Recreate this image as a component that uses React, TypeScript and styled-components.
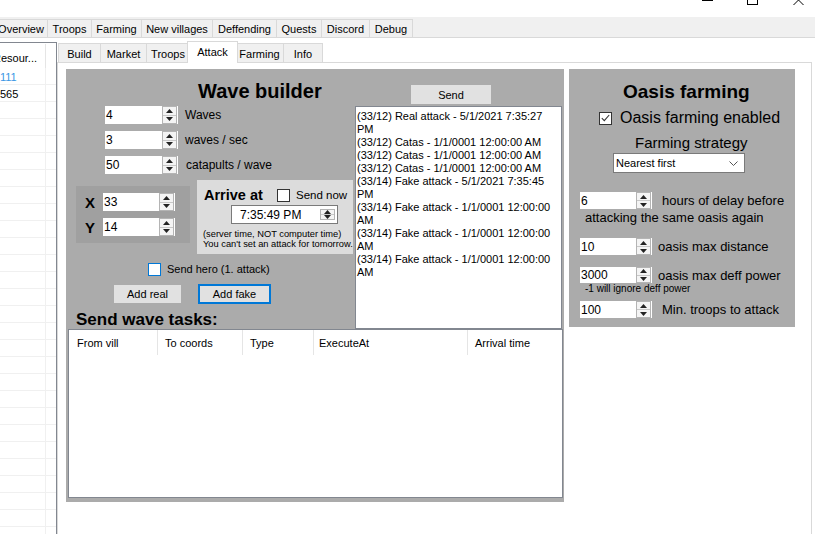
import React from 'react';
import styled, { createGlobalStyle } from 'styled-components';

const GlobalStyle = createGlobalStyle`
  html, body { margin: 0; padding: 0; background: #fff; }
  body { font-family: "Liberation Sans", Arial, sans-serif; font-size: 11px; color: #000; overflow: hidden; }
  * { box-sizing: border-box; }
`;

const Window = styled.div`
  width: 815px; height: 534px; overflow: hidden;
  display: flex; flex-direction: column; background: #fff;
`;

const TitleBar = styled.div`
  height: 17px; flex: none; display: flex; justify-content: flex-end; margin-right: -7px;
`;
const CaptionBtn = styled.div`
  width: 46px; height: 17px; display: flex;
`;

const MainTabBar = styled.div`
  height: 21px; flex: none; background: #f0f0f0; border-bottom: 1px solid #d9d9d9;
  display: flex; align-items: flex-end;
`;
const MainTabsRow = styled.div`
  display: flex; margin-left: -6px; align-items: flex-end;
`;
const MainTab = styled.div<{ $w: number }>`
  width: ${p => p.$w}px; height: 18px; border-top: 1px solid #d9d9d9; border-left: 1px solid #d9d9d9;
  margin-right: -1px; border-right: 1px solid #d9d9d9;
  display: flex; align-items: center; justify-content: center; background: #f0f0f0; font-size: 11px; white-space: nowrap;
`;

const Content = styled.div`
  flex: 1; min-height: 0; display: flex;
`;

const LeftList = styled.div`
  width: 57px; flex: none; margin-top: 4px; border-top: 1px solid #828790; border-right: 1px solid #828790;
  overflow: hidden; display: flex; flex-direction: column;
`;
const ListHeader = styled.div`
  height: 25px; flex: none; display: flex;
`;
const ListHeaderCell = styled.div`
  width: 46px; border-right: 1px solid #e5e5e5; margin: 1px 0 0; padding-top: 3px; display: flex; align-items: center;
  white-space: nowrap; overflow: hidden; font-size: 11px;
`;
const HeaderText = styled.span`
  margin-left: -7px;
`;
const ListRow = styled.div`
  height: 17px; flex: none; display: flex; border-bottom: 1px solid #f0f0f0;
`;
const ListCell = styled.div<{ $blue?: boolean }>`
  width: 46px; border-right: 1px solid #f0f0f0; display: flex; align-items: center; padding-top: 1px;
  color: ${p => (p.$blue ? '#3a97e4' : '#000')}; font-size: 11px;
`;

const SubTabs = styled.div`
  flex: 1; min-width: 0; display: flex; flex-direction: column; margin-right: 3px;
`;
const SubTabStrip = styled.div`
  height: 24px; flex: none; display: flex; align-items: flex-end; padding-left: 1px;
`;
const SubTab = styled.div<{ $w: number; $active?: boolean }>`
  width: ${p => p.$w}px; height: ${p => (p.$active ? 22 : 19)}px;
  margin: 0 ${p => (p.$active ? -3 : -1)}px ${p => (p.$active ? -1 : 0)}px ${p => (p.$active ? -2 : 0)}px;
  border: 1px solid #d9d9d9; border-bottom: none;
  background: ${p => (p.$active ? '#fff' : '#f0f0f0')};
  position: relative; z-index: ${p => (p.$active ? 2 : 1)};
  display: flex; align-items: center; justify-content: center; font-size: 11px;
  padding-bottom: ${p => (p.$active ? 2 : 0)}px; padding-top: ${p => (p.$active ? 0 : 1)}px;
`;
const Page = styled.div`
  flex: 1; border: 1px solid #d9d9d9; border-bottom: none; padding: 6px 0 0 8px;
  display: flex; align-items: flex-start; gap: 5px; background: #fff;
`;

const WavePanel = styled.div`
  width: 498px; height: 433px; flex: none; background: #ababab;
  display: flex; flex-direction: column; padding: 0 1px 4px 2px;
`;
const TopArea = styled.div`
  height: 260px; flex: none; display: flex;
`;
const LeftCol = styled.div`
  width: 286px; flex: none; display: flex; flex-direction: column;
`;
const RightCol = styled.div`
  flex: 1; display: flex; flex-direction: column;
`;
const BigTitle = styled.div<{ $size: number }>`
  font-weight: bold; font-size: ${p => p.$size}px; line-height: 24px; height: 24px; white-space: nowrap;
`;
const WaveTitle = styled(BigTitle)`
  margin: 10px 0 0 130px;
`;
const InputRows = styled.div`
  display: flex; flex-direction: column; gap: 7px; margin: 3px 0 0 37px;
`;
const InputRow = styled.div<{ $gap: number }>`
  display: flex; align-items: center; gap: ${p => p.$gap}px;
`;
const Label = styled.span<{ $size: number }>`
  font-size: ${p => p.$size}px; white-space: nowrap;
`;

const SpinBox = styled.div<{ $h: number; $w: number }>`
  width: ${p => p.$w}px; height: ${p => p.$h}px; flex: none; display: flex; background: #fff;
`;
const SpinText = styled.div`
  flex: 1; font-size: 12px; padding-left: 1px; display: flex; align-items: center;
`;
const SpinButtons = styled.div`
  width: 15px; display: flex; flex-direction: column; border: 1px solid #b4b4b4; background: #f4f4f4; margin: 0 1px 0 0;
`;
const SpinBtn = styled.div<{ $top?: boolean }>`
  flex: 1; display: flex; align-items: center; justify-content: center;
  border-bottom: ${p => (p.$top ? '1px solid #c8c8c8' : 'none')};
`;

const UpArrow = () => (
  <svg width="7" height="4" viewBox="0 0 7 4"><path d="M0 4 L3.5 0 L7 4 Z" fill="#222" /></svg>
);
const DownArrow = () => (
  <svg width="7" height="4" viewBox="0 0 7 4"><path d="M0 0 L3.5 4 L7 0 Z" fill="#222" /></svg>
);

const Spinner: React.FC<{ value: string; h?: number; w?: number }> = ({ value, h = 18, w = 73 }) => (
  <SpinBox $h={h} $w={w}>
    <SpinText>{value}</SpinText>
    <SpinButtons>
      <SpinBtn $top><UpArrow /></SpinBtn>
      <SpinBtn><DownArrow /></SpinBtn>
    </SpinButtons>
  </SpinBox>
);

const XYArriveRow = styled.div`
  display: flex; gap: 7px; margin: 6px 0 0 8px; align-items: flex-start;
`;
const XYBox = styled.div`
  width: 114px; height: 57px; margin-top: 6px; background: #a0a0a0;
  display: grid; grid-template-columns: 18px 73px; row-gap: 7px; padding: 7px 0 0 9px; align-content: start;
`;
const AxisLabel = styled.div`
  font-weight: bold; font-size: 15px; height: 18px; display: flex; align-items: center;
`;
const ArriveBox = styled.div`
  width: 156px; height: 74px; background: #dcdcdc; display: flex; flex-direction: column;
`;
const ArriveHead = styled.div`
  display: flex; align-items: center; height: 20px; margin-top: 5px; padding-left: 7px;
`;
const ArriveTitle = styled.span`
  font-weight: bold; font-size: 14.5px; white-space: nowrap; width: 73px;
`;
const CheckLabel = styled.label<{ $size: number; $gap: number }>`
  display: flex; align-items: center; gap: ${p => p.$gap}px; font-size: ${p => p.$size}px; white-space: nowrap;
`;
const CheckBox = styled.span<{ $color: string }>`
  width: 13px; height: 13px; flex: none; border: 1px solid ${p => p.$color}; background: #fff;
  display: flex; align-items: center; justify-content: center;
`;
const TimePicker = styled.div`
  width: 107px; height: 19px; margin: 0 0 0 34px; border: 1px solid #7a7a7a; background: #fff;
  display: flex; align-items: center; padding: 1px;
`;
const TimeText = styled.div`
  flex: 1; font-size: 12px; padding-left: 7px;
`;
const Note = styled.div`
  font-size: 9.3px; line-height: 10px; white-space: nowrap; padding-left: 6px;
`;
const NoteBlock = styled.div`
  margin-top: 5px;
`;
const HeroRow = styled.div`
  margin: 8px 0 0 80px; height: 14px; display: flex;
`;
const ButtonRow = styled.div`
  display: flex; align-items: center; gap: 17px; margin: 8px 0 0 46px; height: 20px;
`;
const WinButton = styled.div<{ $w: number; $focus?: boolean }>`
  width: ${p => p.$w}px; height: ${p => (p.$focus ? 20 : 18)}px; background: #e1e1e1;
  border: ${p => (p.$focus ? '2px solid #0078d7' : '1px solid #e1e1e1')};
  display: flex; align-items: center; justify-content: center; font-size: 11px;
`;
const SendButton = styled(WinButton)`
  margin: 16px 0 0 57px; height: 19px;
`;
const SectionLabel = styled.div`
  font-weight: bold; font-size: 17px; line-height: 19px; height: 19px; margin: 6px 0 0 8px; white-space: nowrap;
`;
const ListBox = styled.div`
  flex: 1; margin: 2px 1px 0 1px; background: #fff; border: 1px solid #828790;
  padding: 3px 4px 0 1px; font-size: 11px; line-height: 13px;
`;

const Table = styled.div`
  flex: 1; background: #fff; border: 1px solid #828790; display: flex; flex-direction: column;
`;
const TableHead = styled.div`
  height: 25px; display: grid; grid-template-columns: 89px 85px 71px 154px 1fr;
`;
const HeadCell = styled.div<{ $last?: boolean; $pad?: number }>`
  border-right: ${p => (p.$last ? 'none' : '1px solid #e5e5e5')}; padding-left: ${p => p.$pad ?? 7}px;
  display: flex; align-items: center; font-size: 11px; white-space: nowrap;
`;

const OasisPanel = styled.div`
  width: 226px; height: 258px; flex: none; background: #ababab; display: flex; flex-direction: column;
`;
const OasisTitle = styled(BigTitle)`
  margin: 11px 0 0 54px;
`;
const OasisCheck = styled.div`
  margin: 5px 0 0 30px; height: 18px; display: flex;
`;
const StrategyLabel = styled.div`
  font-size: 15px; line-height: 18px; margin: 7px 0 0 66px; white-space: nowrap;
`;
const Select = styled.div`
  width: 132px; height: 20px; margin: 1px 0 0 44px; background: #fff; border: 1px solid #7a7a7a;
  display: flex; align-items: center; justify-content: space-between; padding: 0 6px 0 2px; font-size: 11px;
`;
const OasisRow = styled.div<{ $top: number; $gap: number }>`
  display: flex; align-items: center; gap: ${p => p.$gap}px; margin: ${p => p.$top}px 0 0 11px;
`;
const OasisNote = styled.div<{ $size: number; $lh: number }>`
  font-size: ${p => p.$size}px; line-height: ${p => p.$lh}px; margin-left: 16px; white-space: nowrap;
`;

const Check = () => (
  <svg width="9" height="8" viewBox="0 0 9 8"><path d="M0.8 4.2 L3.3 6.6 L8.2 1" fill="none" stroke="#333" strokeWidth="1.1" /></svg>
);

const listItems = [
  '(33/12) Real attack - 5/1/2021 7:35:27 PM',
  '(33/12) Catas - 1/1/0001 12:00:00 AM',
  '(33/12) Catas - 1/1/0001 12:00:00 AM',
  '(33/12) Catas - 1/1/0001 12:00:00 AM',
  '(33/14) Fake attack - 5/1/2021 7:35:45 PM',
  '(33/14) Fake attack - 1/1/0001 12:00:00 AM',
  '(33/14) Fake attack - 1/1/0001 12:00:00 AM',
  '(33/14) Fake attack - 1/1/0001 12:00:00 AM',
];

const mainTabs: [string, number][] = [
  ['Overview', 54], ['Troops', 45], ['Farming', 51], ['New villages', 72], ['Deffending', 65],
  ['Quests', 46], ['Discord', 49], ['Debug', 44],
];
const subTabs: [string, number, boolean][] = [
  ['Build', 43, false], ['Market', 47, false], ['Troops', 44, false], ['Attack', 51, true], ['Farming', 49, false], ['Info', 40, false],
];

export default function App() {
  const rows = Array.from({ length: 28 });
  return (
    <Window>
      <GlobalStyle />
      <TitleBar>
        <CaptionBtn>
          <svg width="46" height="17"><line x1="18" y1="0.5" x2="29" y2="0.5" stroke="#000" strokeWidth="1" /></svg>
        </CaptionBtn>
        <CaptionBtn>
          <svg width="46" height="17"><rect x="17.5" y="-5.5" width="10" height="10" fill="none" stroke="#000" strokeWidth="1" /></svg>
        </CaptionBtn>
        <CaptionBtn>
          <svg width="46" height="17"><path d="M17.5 -5 L27.5 5 M27.5 -5 L17.5 5" stroke="#000" strokeWidth="1" /></svg>
        </CaptionBtn>
      </TitleBar>
      <MainTabBar>
        <MainTabsRow>
          {mainTabs.map(([t, w]) => (
            <MainTab key={t} $w={w}>{t}</MainTab>
          ))}
        </MainTabsRow>
      </MainTabBar>
      <Content>
        <LeftList>
          <ListHeader><ListHeaderCell><HeaderText>Resour...</HeaderText></ListHeaderCell></ListHeader>
          <ListRow><ListCell $blue>111</ListCell></ListRow>
          <ListRow><ListCell>565</ListCell></ListRow>
          {rows.map((_, i) => (
            <ListRow key={i}><ListCell /></ListRow>
          ))}
        </LeftList>
        <SubTabs>
          <SubTabStrip>
            {subTabs.map(([t, w, a]) => (
              <SubTab key={t} $w={w} $active={a}>{t}</SubTab>
            ))}
          </SubTabStrip>
          <Page>
            <WavePanel>
              <TopArea>
                <LeftCol>
                  <WaveTitle $size={20}>Wave builder</WaveTitle>
                  <InputRows>
                    <InputRow $gap={7}><Spinner value="4" /><Label $size={12}>Waves</Label></InputRow>
                    <InputRow $gap={7}><Spinner value="3" /><Label $size={12}>waves / sec</Label></InputRow>
                    <InputRow $gap={8}><Spinner value="50" /><Label $size={12}>catapults / wave</Label></InputRow>
                  </InputRows>
                  <XYArriveRow>
                    <XYBox>
                      <AxisLabel>X</AxisLabel><Spinner value="33" w={72} />
                      <AxisLabel>Y</AxisLabel><Spinner value="14" w={72} />
                    </XYBox>
                    <ArriveBox>
                      <ArriveHead>
                        <ArriveTitle>Arrive at</ArriveTitle>
                        <CheckLabel $size={11.5} $gap={6}><CheckBox $color="#333" />Send now</CheckLabel>
                      </ArriveHead>
                      <TimePicker>
                        <TimeText>7:35:49 PM</TimeText>
                        <SpinButtons>
                          <SpinBtn $top><UpArrow /></SpinBtn>
                          <SpinBtn><DownArrow /></SpinBtn>
                        </SpinButtons>
                      </TimePicker>
                      <NoteBlock>
                        <Note>(server time, NOT computer time)</Note>
                        <Note>You can't set an attack for tomorrow.</Note>
                      </NoteBlock>
                    </ArriveBox>
                  </XYArriveRow>
                  <HeroRow>
                    <CheckLabel $size={11} $gap={6}><CheckBox $color="#0078d7" />Send hero (1. attack)</CheckLabel>
                  </HeroRow>
                  <ButtonRow>
                    <WinButton $w={67}>Add real</WinButton>
                    <WinButton $w={73} $focus>Add fake</WinButton>
                  </ButtonRow>
                  <SectionLabel>Send wave tasks:</SectionLabel>
                </LeftCol>
                <RightCol>
                  <SendButton $w={80}>Send</SendButton>
                  <ListBox>
                    {listItems.map((t, i) => (
                      <div key={i}>{t}</div>
                    ))}
                  </ListBox>
                </RightCol>
              </TopArea>
              <Table>
                <TableHead>
                  <HeadCell $pad={8}>From vill</HeadCell>
                  <HeadCell>To coords</HeadCell>
                  <HeadCell>Type</HeadCell>
                  <HeadCell $pad={5}>ExecuteAt</HeadCell>
                  <HeadCell $last>Arrival time</HeadCell>
                </TableHead>
              </Table>
            </WavePanel>
            <OasisPanel>
              <OasisTitle $size={19}>Oasis farming</OasisTitle>
              <OasisCheck>
                <CheckLabel $size={16} $gap={8}><CheckBox $color="#333"><Check /></CheckBox>Oasis farming enabled</CheckLabel>
              </OasisCheck>
              <StrategyLabel>Farming strategy</StrategyLabel>
              <Select>
                <span>Nearest first</span>
                <svg width="9" height="5" viewBox="0 0 9 5"><path d="M0.5 0.5 L4.5 4.5 L8.5 0.5" fill="none" stroke="#555" strokeWidth="1" /></svg>
              </Select>
              <OasisRow $top={19} $gap={10}><Spinner value="6" h={17} w={72} /><Label $size={13}>hours of delay before</Label></OasisRow>
              <OasisNote $size={13} $lh={17}>attacking the same oasis again</OasisNote>
              <OasisRow $top={12} $gap={6}><Spinner value="10" h={17} w={72} /><Label $size={13}>oasis max distance</Label></OasisRow>
              <OasisRow $top={12} $gap={6}><Spinner value="3000" h={16} w={72} /><Label $size={13}>oasis max deff power</Label></OasisRow>
              <OasisNote $size={10} $lh={12}>-1 will ignore deff power</OasisNote>
              <OasisRow $top={6} $gap={10}><Spinner value="100" h={17} w={72} /><Label $size={13}>Min. troops to attack</Label></OasisRow>
            </OasisPanel>
          </Page>
        </SubTabs>
      </Content>
    </Window>
  );
}
